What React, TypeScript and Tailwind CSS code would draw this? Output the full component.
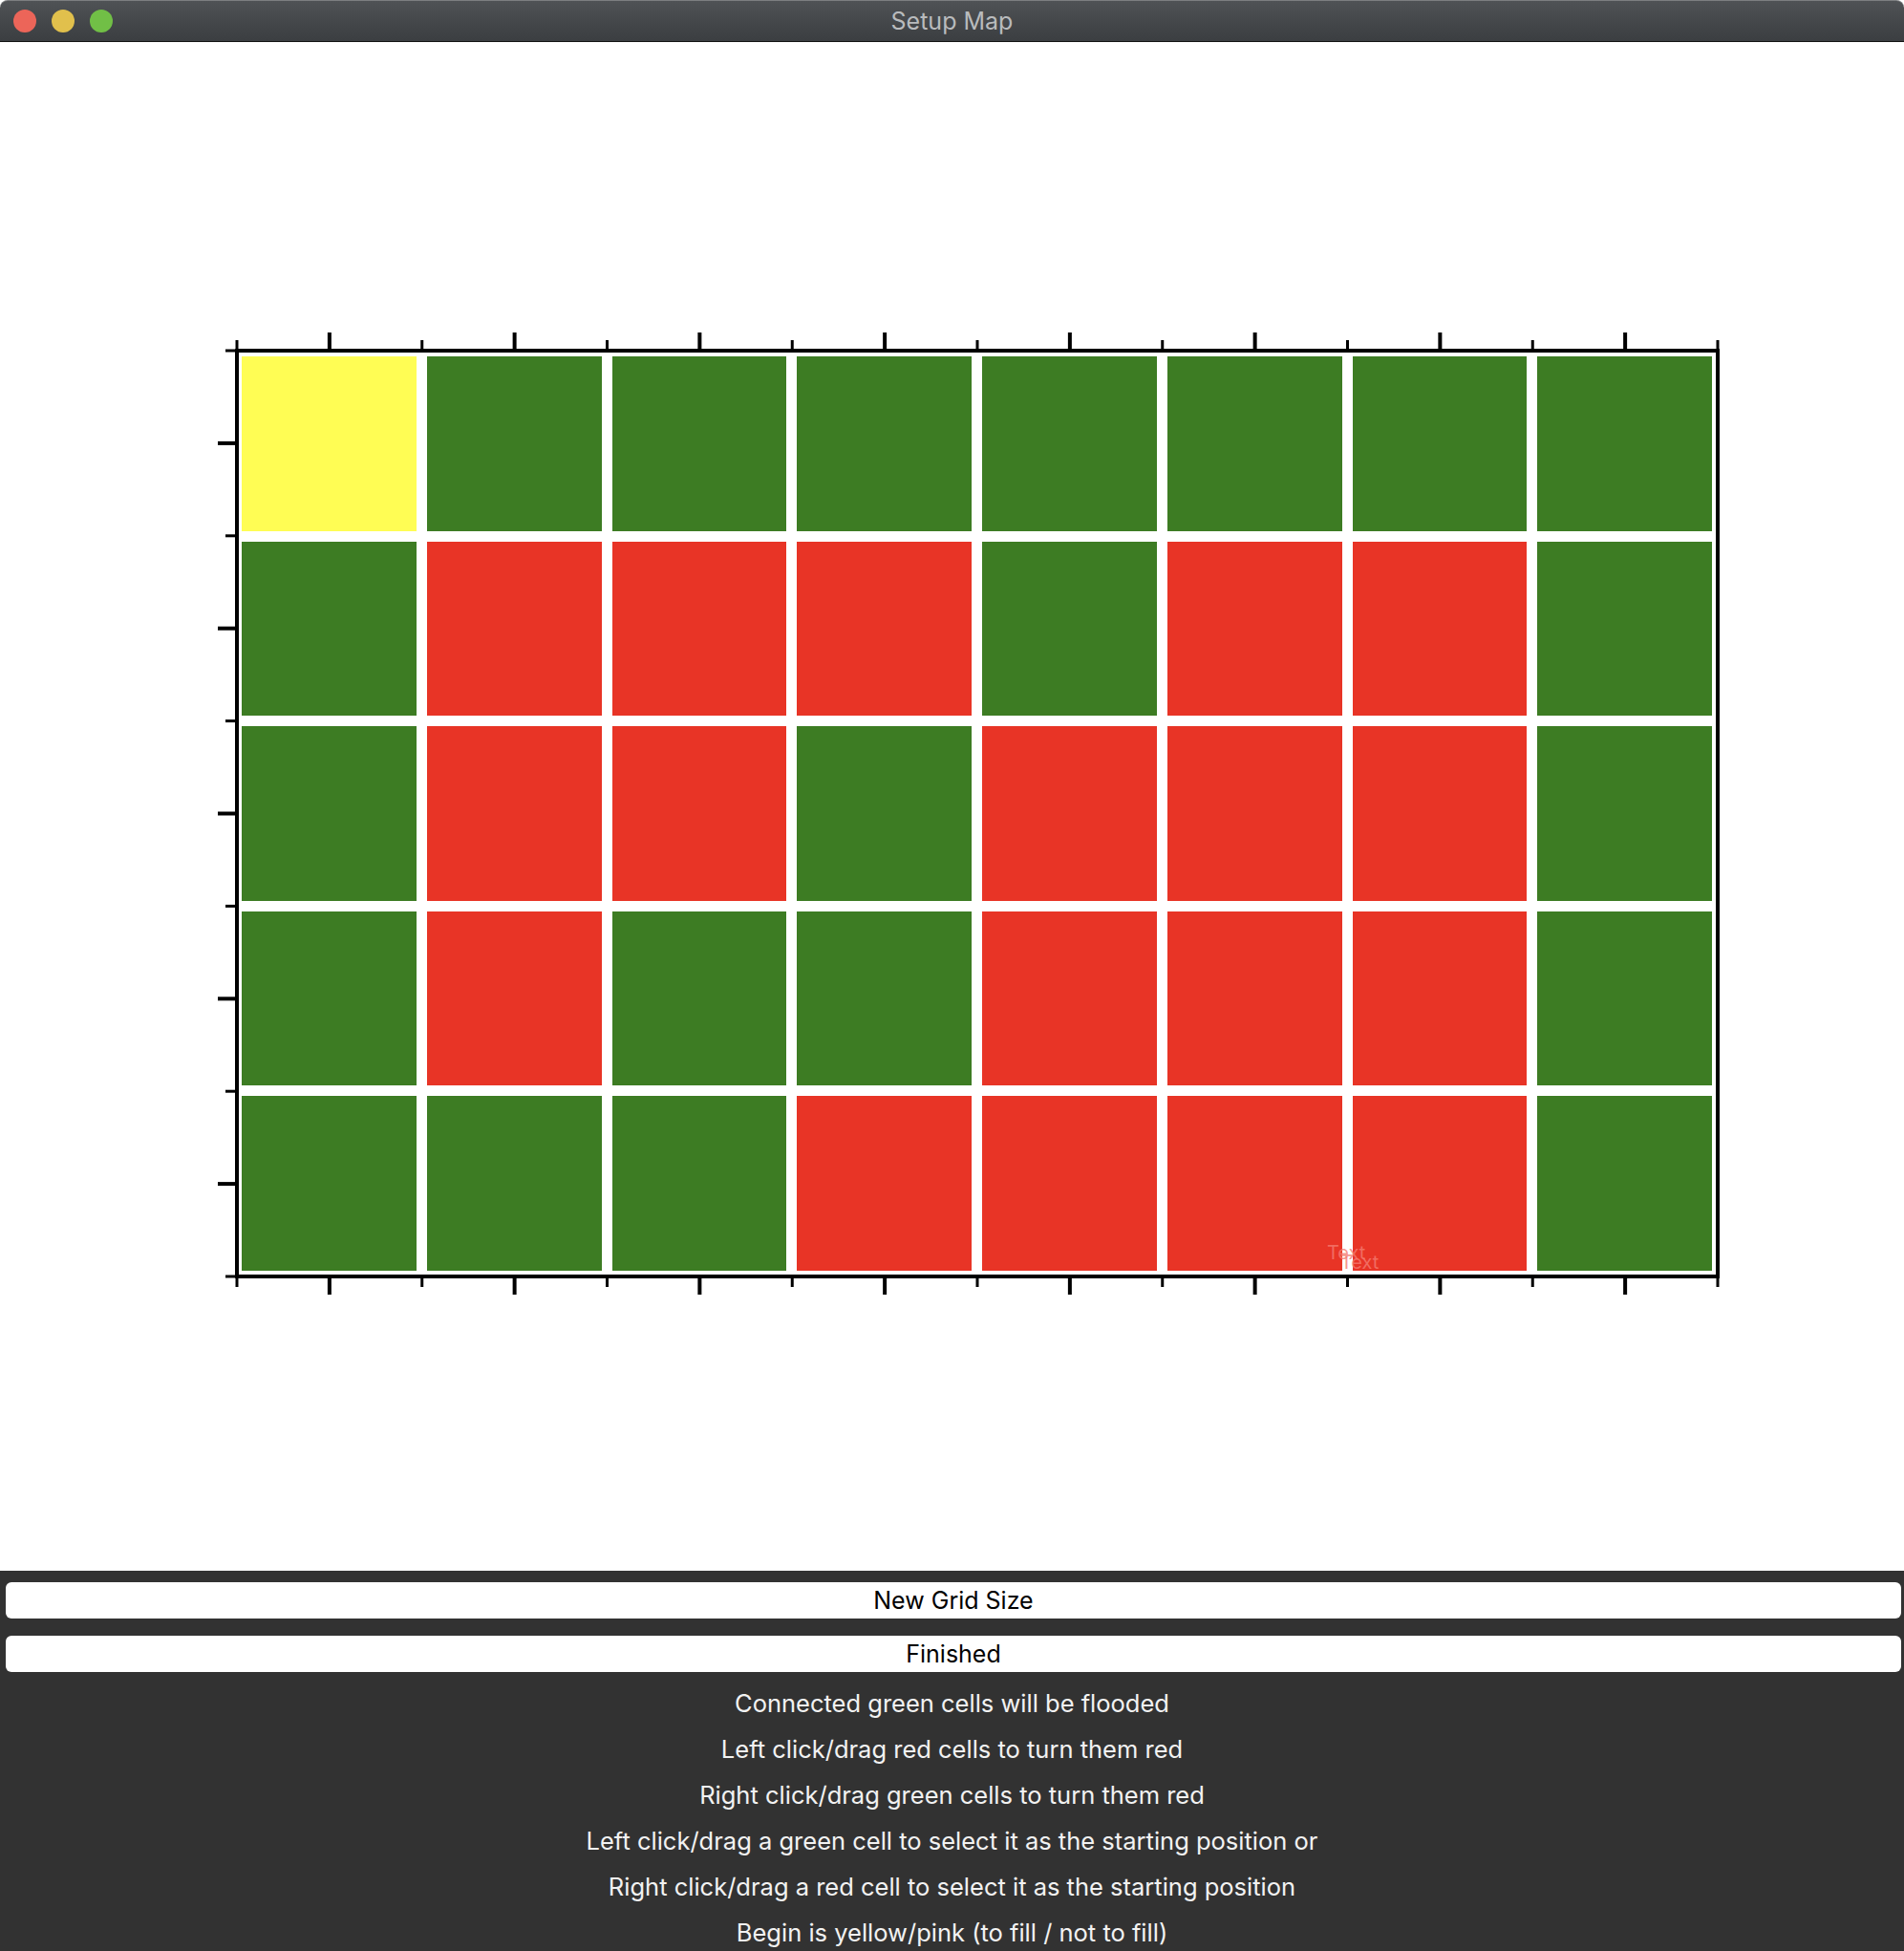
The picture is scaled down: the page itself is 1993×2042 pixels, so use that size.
const rows = [
  "YGGGGGGG",
  "GRRRGRRG",
  "GRRGRRRG",
  "GRGGRRRG",
  "GGGRRRRG",
];

const cellColor: Record<string, string> = {
  Y: "bg-[#fffd54]",
  G: "bg-[#3d7c23]",
  R: "bg-[#e83426]",
};

const instructions = [
  "Connected green cells will be flooded",
  "Left click/drag red cells to turn them red",
  "Right click/drag green cells to turn them red",
  "Left click/drag a green cell to select it as the starting position or",
  "Right click/drag a red cell to select it as the starting position",
  "Begin is yellow/pink (to fill / not to fill)",
];

// axis frame, outer box 1554 x 973, line centre at 2px inside
const W = 1554;
const H = 973;
const x0 = 2;
const x1 = W - 2;
const y0 = 2;
const y1 = H - 2;
const colStep = (x1 - x0) / 8;
const rowStep = (y1 - y0) / 5;

const Axes = () => {
  const ticks: JSX.Element[] = [];
  for (let i = 0; i <= 8; i++) {
    const x = x0 + colStep * i;
    ticks.push(<line key={`tm${i}`} x1={x} y1={y0} x2={x} y2={-9} strokeWidth={3} />);
    ticks.push(<line key={`bm${i}`} x1={x} y1={y1} x2={x} y2={y1 + 11} strokeWidth={3} />);
    if (i < 8) {
      const c = x + colStep / 2;
      ticks.push(<line key={`tM${i}`} x1={c} y1={y0} x2={c} y2={-17} strokeWidth={4} />);
      ticks.push(<line key={`bM${i}`} x1={c} y1={y1} x2={c} y2={y1 + 19} strokeWidth={4} />);
    }
  }
  for (let j = 0; j <= 5; j++) {
    const y = y0 + rowStep * j;
    ticks.push(<line key={`lm${j}`} x1={x0} y1={y} x2={-10} y2={y} strokeWidth={3} />);
    if (j < 5) {
      const c = y + rowStep / 2;
      ticks.push(<line key={`lM${j}`} x1={x0} y1={c} x2={-18} y2={c} strokeWidth={4} />);
    }
  }
  return (
    <svg
      width={W}
      height={H}
      className="absolute -left-[4px] -top-[4px] overflow-visible pointer-events-none"
    >
      <g stroke="#000">{ticks}</g>
    </svg>
  );
};

const TrafficLights = () => (
  <div className="flex items-center gap-[16px] pl-[14px]">
    <span className="w-[24px] h-[24px] rounded-full bg-[#ec6559]" />
    <span className="w-[24px] h-[24px] rounded-full bg-[#e1c04c]" />
    <span className="w-[24px] h-[24px] rounded-full bg-[#71bf46]" />
  </div>
);

export default function App() {
  return (
    <div
      className="w-[1993px] h-[2042px] overflow-hidden flex flex-col bg-white"
      style={{ fontFamily: "Inter, 'Noto Sans', sans-serif" }}
    >
      {/* title bar */}
      <div className="relative h-[44px] shrink-0 flex items-center bg-gradient-to-b from-[#4f5255] to-[#3b3e41] border-t border-[#7d7f81] border-b border-b-[#141414] rounded-tl-[8px] rounded-tr-[8px]">
        <TrafficLights />
        <div className="absolute inset-0 pt-[2px] flex items-center justify-center text-[25px] text-[#b9bbbd]">
          Setup Map
        </div>
      </div>

      {/* map area */}
      <div className="h-[1600px] shrink-0 bg-white pt-[321px] pl-[246px]">
        <div className="relative w-[1554px] h-[973px] border-4 border-black">
          <div className="grid grid-cols-8 grid-rows-5 gap-[11px] pl-[3px] pr-[4px] py-[4px] h-full">
            {rows.map((row, r) =>
              row.split("").map((c, i) => (
                <div key={`${r}-${i}`} className={cellColor[c]} />
              ))
            )}
          </div>
          <Axes />
          <span className="absolute left-[1139px] top-[932px] text-[20px] leading-none text-[#f47b70]/80">
            Text
          </span>
          <span className="absolute left-[1153px] top-[942px] text-[20px] leading-none text-[#f47b70]/80">
            Text
          </span>
        </div>
      </div>

      {/* controls */}
      <div className="flex-1 bg-[#323232] pt-[12px] flex flex-col">
        <button className="ml-[6px] mr-[3px] h-[38px] rounded-[6px] bg-white text-black text-[25px] leading-none flex items-center justify-center">
          New Grid Size
        </button>
        <button className="mt-[18px] ml-[6px] mr-[3px] h-[38px] rounded-[6px] bg-white text-black text-[25px] leading-none flex items-center justify-center">
          Finished
        </button>
        <div className="mt-[9px] flex flex-col items-center text-[25.5px] text-[#f2f2f2]">
          {instructions.map((t) => (
            <p key={t} className="h-[48px] leading-[48px]">
              {t}
            </p>
          ))}
        </div>
      </div>
    </div>
  );
}
